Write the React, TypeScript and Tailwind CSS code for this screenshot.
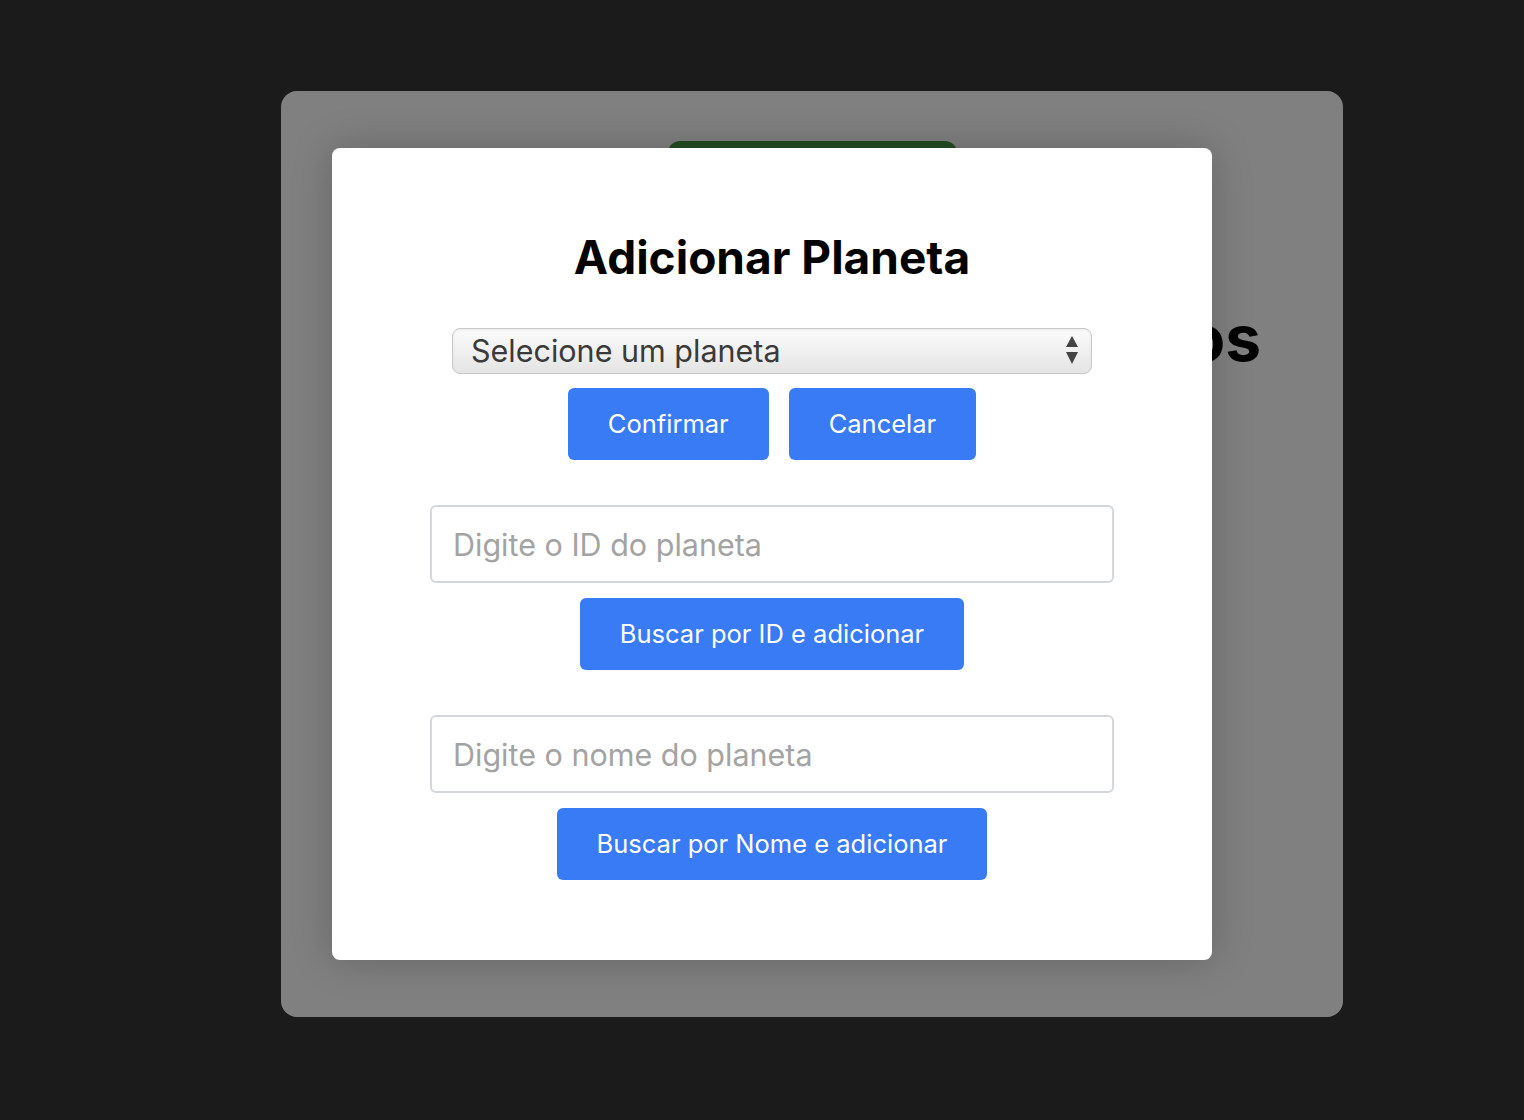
import React from 'react';

const font = { fontFamily: 'Inter, "Noto Sans", sans-serif' };

const SelectArrows: React.FC = () => (
  <svg width="14" height="30" viewBox="0 0 14 30" className="pointer-events-none absolute right-[13px] top-[7px]">
    <path d="M7 1 L13 12 L1 12 Z" fill="#444" />
    <path d="M1 17 L13 17 L7 29 Z" fill="#444" />
  </svg>
);

const Modal: React.FC = () => {
  return (
    <div className="w-[880px] h-[812px] bg-white rounded-lg shadow-[0_0_40px_rgba(0,0,0,0.22)] flex flex-col items-center pt-[82px]">
      <h2 className="h-[55px] leading-[55px] text-[46px] font-bold text-black">Adicionar Planeta</h2>

      <div className="relative mt-[43px] w-[640px]">
        <select
          className="appearance-none w-full h-[46px] rounded-lg border border-[#c9c9c9] bg-gradient-to-b from-[#fbfbfb] via-[#f0f0f0] to-[#e4e4e4] pl-[18px] text-[30.5px] leading-[44px] text-[#3a3a3a] shadow-[inset_0_1px_2px_rgba(0,0,0,0.08)] outline-none"
          defaultValue=""
        >
          <option value="">Selecione um planeta</option>
        </select>
        <SelectArrows />
      </div>

      <div className="mt-[14px] flex gap-5">
        <button className="h-[72px] px-10 rounded-md bg-[#387bf5] text-white text-[25.5px]">Confirmar</button>
        <button className="h-[72px] px-10 rounded-md bg-[#387bf5] text-white text-[25.5px]">Cancelar</button>
      </div>

      <input
        className="mt-[45px] w-[684px] h-[78px] rounded-md border-2 border-[#d3d7db] px-[21px] text-[30.5px] text-[#333] placeholder:text-[#a3a3a3] outline-none"
        placeholder="Digite o ID do planeta"
      />
      <button className="mt-[15px] h-[72px] px-10 rounded-md bg-[#387bf5] text-white text-[25.5px]">Buscar por ID e adicionar</button>

      <input
        className="mt-[45px] w-[684px] h-[78px] rounded-md border-2 border-[#d3d7db] px-[21px] text-[30.5px] text-[#333] placeholder:text-[#a3a3a3] outline-none"
        placeholder="Digite o nome do planeta"
      />
      <button className="mt-[15px] h-[72px] px-10 rounded-md bg-[#387bf5] text-white text-[25.5px]">Buscar por Nome e adicionar</button>
    </div>
  );
};

export default function App() {
  return (
    <div className="min-h-[1120px] bg-[#1b1b1b] pt-[91px] pl-[281px]" style={font}>
      <div className="relative w-[1062px] h-[926px] rounded-2xl bg-[#808080] overflow-hidden">
        <div className="flex flex-col items-center pt-[50px]">
          <div className="w-[289px] h-[60px] rounded-xl bg-[#234d23]" />
        </div>
        <h1 className="mt-[105px] pr-[82px] text-right text-[64px] font-bold leading-none text-black">Planetas Favoritos</h1>

        <div className="absolute inset-0 flex items-center pl-[51px]">
          <Modal />
        </div>
      </div>
    </div>
  );
}
